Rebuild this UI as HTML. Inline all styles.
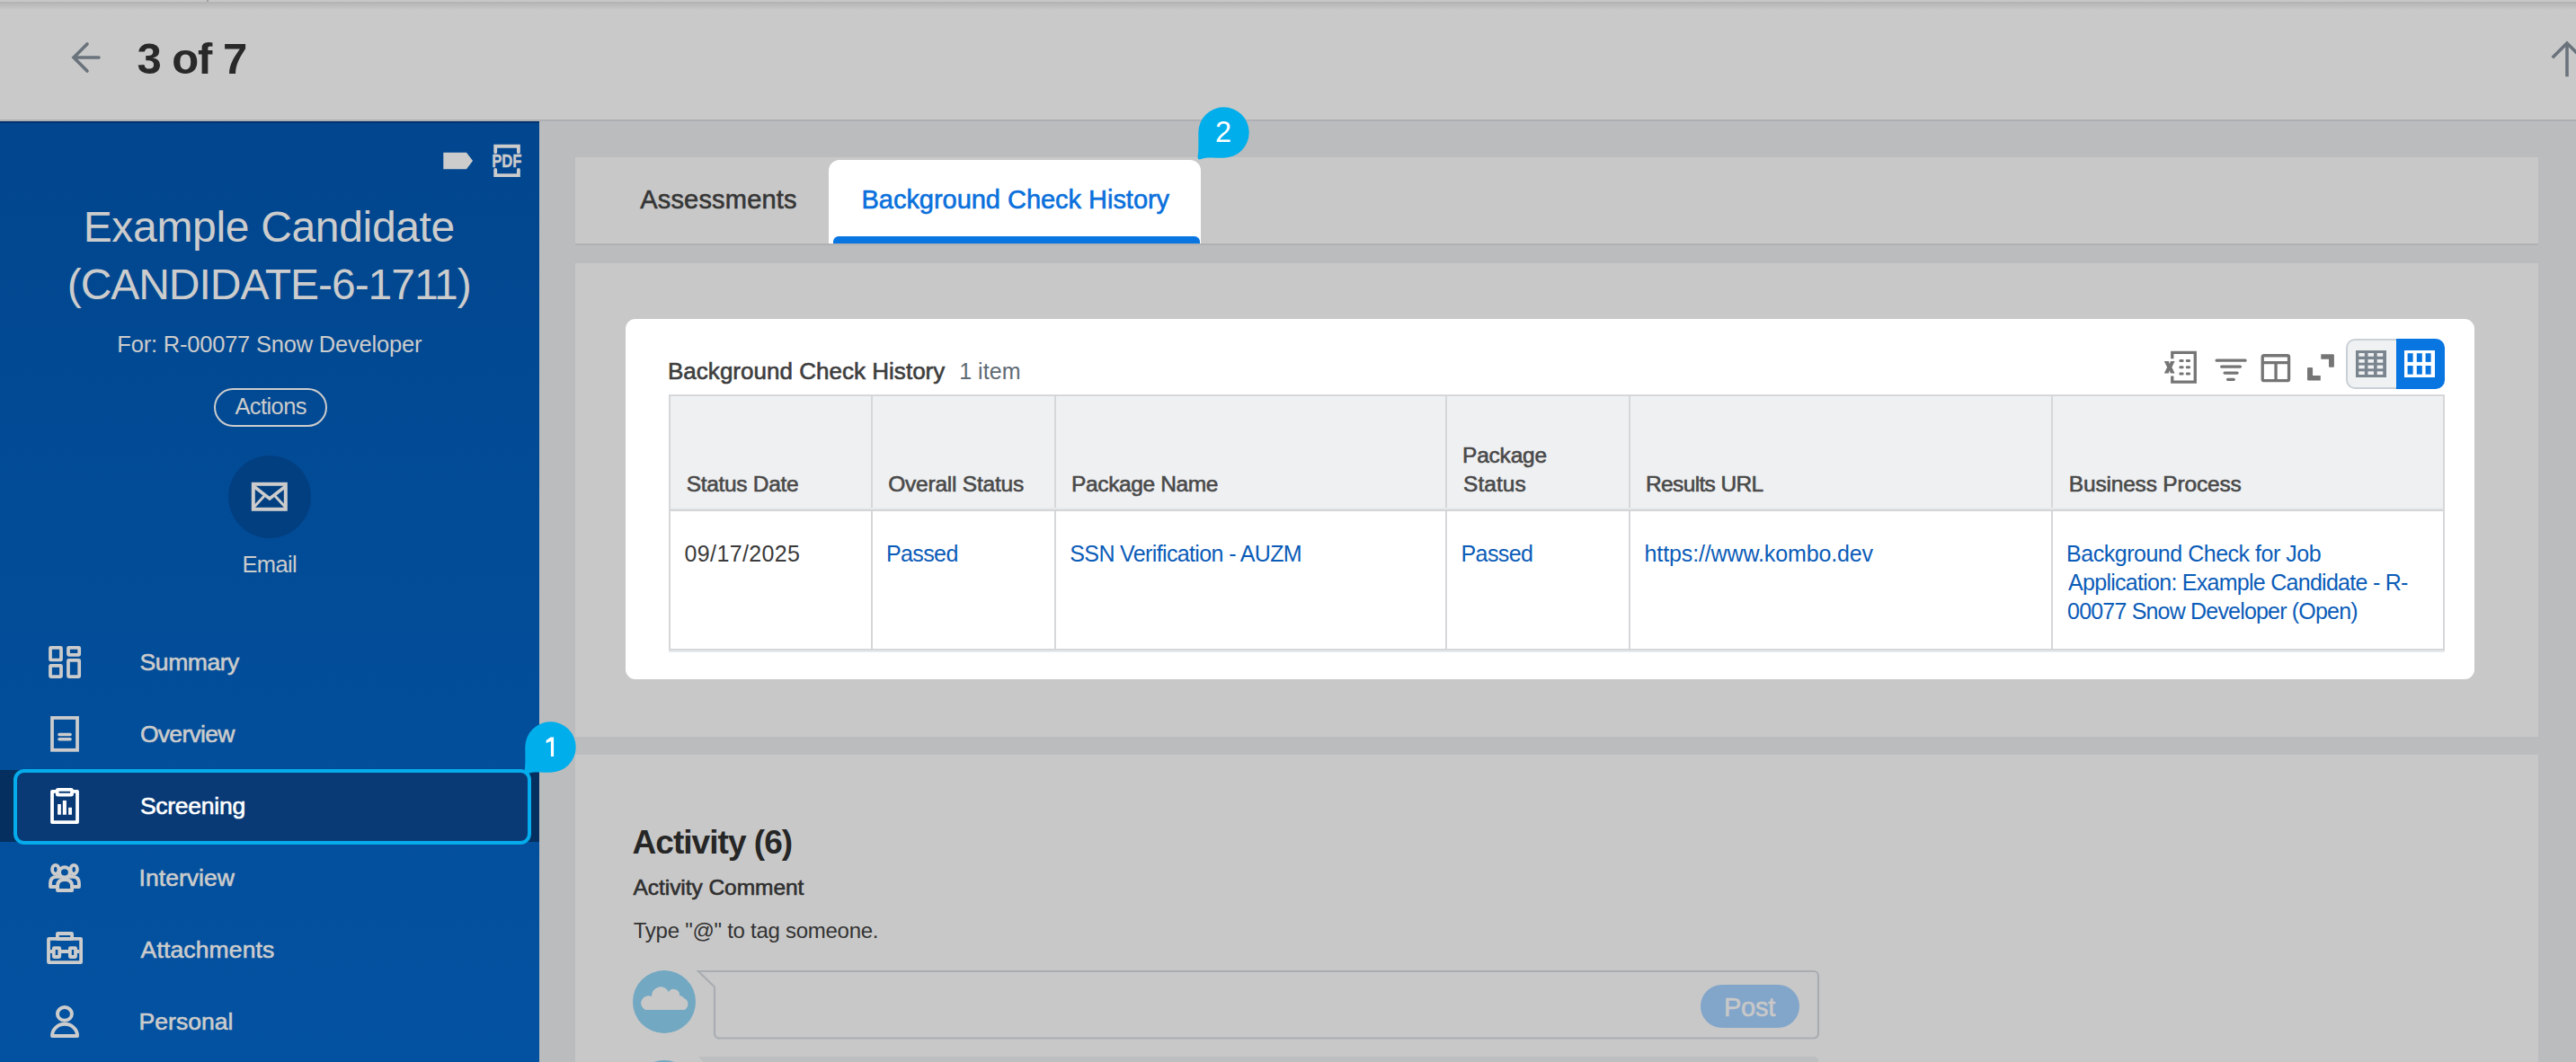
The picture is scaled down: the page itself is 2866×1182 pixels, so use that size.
<!DOCTYPE html>
<html><head><meta charset="utf-8">
<style>
*{box-sizing:border-box;margin:0;padding:0}
html,body{width:2866px;height:1182px;overflow:hidden;background:#bbbcbe;font-family:"Liberation Sans",sans-serif;position:relative}
.abs{position:absolute}
.t{position:absolute;white-space:nowrap;line-height:1}
#hdr{left:0;top:0;width:2866px;height:135px;background:#c9c9c9;border-bottom:2px solid #aeafb3}
#topbar{left:0;top:0;width:2866px;height:2px;background:#c7c7c7}
#shadow{left:0;top:2px;width:2866px;height:9px;background:linear-gradient(#b2b2b2,#c9c9c9)}
#side{left:0;top:135px;width:600px;height:1047px;background:linear-gradient(#01468e,#0352a1)}
.panel{position:absolute;left:640px;width:2184px;background:#c8c8c8}
.ic{fill:none;stroke:#757575}
</style></head><body>
<div id="hdr" class="abs"></div>
<div id="topbar" class="abs"></div>
<div id="shadow" class="abs"></div>
<div class="abs" style="left:230px;top:0;width:2px;height:2px;background:#9aa1a9"></div>

<!-- back arrow -->
<svg class="abs" style="left:78px;top:45px" width="36" height="38" viewBox="0 0 36 38">
<path d="M32 19 H5 M19 4 L4 19 L19 34" fill="none" stroke="#6a737c" stroke-width="3.6" stroke-linecap="round" stroke-linejoin="miter"/>
</svg>
<!-- up arrow -->
<svg class="abs" style="left:2838px;top:44px" width="40" height="44" viewBox="0 0 40 44">
<path d="M18 39.5 V5 M3 19 L18 4 L33 19" fill="none" stroke="#6a737c" stroke-width="3.6" stroke-linecap="square"/>
</svg>

<!-- sidebar -->
<div id="side" class="abs"></div>
<div class="abs" style="left:0;top:135px;width:600px;height:2px;background:linear-gradient(#002a66,#003575)"></div>
<svg class="abs" style="left:480px;top:150px" width="120" height="60" viewBox="0 0 2124 1062">
<path d="M235 350 H690 L815 512 L690 675 H235 Z" fill="#cccccc"/>
<path d="M1260 340 V225 H1715 V340 M1260 690 V800 H1715 V690" fill="none" stroke="#cccccc" stroke-width="68" stroke-linecap="round"/>
<text x="1189" y="635" textLength="591" lengthAdjust="spacingAndGlyphs" font-family="Liberation Sans" font-weight="700" font-size="345" fill="#cccccc" stroke="#cccccc" stroke-width="6">PDF</text>
</svg>
<div class="abs" style="left:238px;top:432px;width:126px;height:43px;border:2.5px solid #cccccc;border-radius:22px"></div>
<div class="abs" style="left:254px;top:507px;width:92px;height:92px;border-radius:50%;background:#023f81"></div>
<svg class="abs" style="left:279px;top:536px" width="42" height="34" viewBox="0 0 42 34">
<rect x="2.8" y="2.8" width="36" height="28" fill="none" stroke="#cccccc" stroke-width="4"/>
<path d="M3 5 L21 19 L39 5" fill="none" stroke="#cccccc" stroke-width="3.5"/>
<path d="M3 29 L15 16 M39 29 L27 16" fill="none" stroke="#cccccc" stroke-width="3"/>
</svg>

<!-- nav -->
<div class="abs" style="left:0;top:857px;width:600px;height:80px;background:#052f5e"></div>
<div class="abs" style="left:15px;top:856px;width:576px;height:84px;border:4px solid #05abeb;border-radius:12px;background:#0a3a76"></div>

<svg class="abs" style="left:40px;top:700px" width="260" height="80" viewBox="0 0 2576 793">
<g fill="none" stroke="#cccccc" stroke-width="37" stroke-linejoin="round">
<rect x="158" y="206" width="119" height="136" rx="6"/><rect x="356" y="206" width="121" height="81" rx="6"/>
<rect x="158" y="406" width="119" height="121" rx="6"/><rect x="356" y="346" width="121" height="181" rx="6"/>
</g></svg>
<svg class="abs" style="left:40px;top:790px" width="160" height="160" viewBox="0 0 1062 1062">
<rect x="119.5" y="59.5" width="186" height="238" fill="none" stroke="#cccccc" stroke-width="25"/>
<path d="M172 182 H253 M172 218 H253" stroke="#cccccc" stroke-width="23" stroke-linecap="round"/>
<rect x="119.5" y="602.5" width="186" height="228" fill="none" stroke="#ffffff" stroke-width="25" stroke-linejoin="round"/>
<rect x="157.5" y="590.5" width="108" height="37" rx="6" fill="#0a3a76" stroke="#ffffff" stroke-width="25"/>
<rect x="160" y="697" width="25" height="78" fill="#fff"/><rect x="198" y="670" width="27" height="105" fill="#fff"/><rect x="240" y="722" width="25" height="53" fill="#fff"/>
</svg>
<svg class="abs" style="left:46px;top:950px" width="54" height="54" viewBox="0 0 1062 1062">
<g fill="none" stroke="#cccccc" stroke-width="76" stroke-linejoin="round">
<ellipse cx="310" cy="347" rx="72" ry="95"/><ellipse cx="712" cy="347" rx="72" ry="95"/>
<path d="M197 727 V650 Q197 510 340 510 H684 Q825 510 825 650 V727 Z"/>
</g>
<ellipse cx="510" cy="410" rx="116" ry="112" fill="#03509d" stroke="#cccccc" stroke-width="78"/>
<path d="M355 805 V705 Q355 572 512 572 Q670 572 670 705 V805 Z" fill="#03509d" stroke="#cccccc" stroke-width="78" stroke-linejoin="round"/>
</svg>
<svg class="abs" style="left:46px;top:1028px" width="54" height="54" viewBox="0 0 1062 1062">
<g fill="none" stroke="#cccccc" stroke-width="75" stroke-linejoin="round">
<rect x="352" y="216" width="318" height="120" rx="8"/>
<rect x="157.5" y="332.5" width="710" height="515" rx="8"/>
<path d="M195 610 H830"/>
<rect x="272" y="532" width="126" height="196" rx="8" fill="#03519f"/>
<rect x="627" y="532" width="121" height="196" rx="8" fill="#03519f"/>
</g></svg>
<svg class="abs" style="left:46px;top:1110px" width="54" height="54" viewBox="0 0 1062 1062">
<g fill="none" stroke="#cccccc" stroke-width="78" stroke-linejoin="round">
<ellipse cx="510" cy="362" rx="157" ry="145"/>
<path d="M237 845 C237 700 360 587 512 587 C665 587 787 700 787 845 Z"/>
</g></svg>

<!-- badge 1 -->
<svg class="abs" style="left:581.3px;top:800.8px" width="62" height="64" viewBox="0 0 62 64"><path d="M3.3 30.5 A28.2 28.2 0 1 1 31.5 58.7 C20 58.7 12 57.5 7 59.8 Q2.5 62 2.6 57.5 C3.8 50 3.3 40 3.3 30.5 Z" fill="#00aeeb"/></svg>

<svg class="abs" style="left:600px;top:810px" width="26" height="40" viewBox="600 810 26 40"><path d="M612.6 820.4 H616.1 V841.9 H612.9 V824.9 L607.7 826.9 V824 Z" fill="#fff"/></svg>
<!-- main panels -->
<div class="panel" style="top:175px;height:98px;border-bottom:2px solid #b0b1b3"></div>
<div class="abs" style="left:922px;top:178px;width:414px;height:93px;background:#fff;border-radius:12px 12px 0 0"></div>
<div class="abs" style="left:927px;top:263px;width:408px;height:8px;background:#0875e1;border-radius:6px 6px 0 0"></div>
<svg class="abs" style="left:1330px;top:116.7px" width="62" height="64" viewBox="0 0 62 64"><path d="M3.3 30.5 A28.2 28.2 0 1 1 31.5 58.7 C20 58.7 12 57.5 7 59.8 Q2.5 62 2.6 57.5 C3.8 50 3.3 40 3.3 30.5 Z" fill="#00aeeb"/></svg>

<div class="panel" style="top:293px;height:527px"></div>
<div class="abs" style="left:696px;top:355px;width:2057px;height:401px;background:#fff;border-radius:11px"></div>

<!-- table -->
<div class="abs" style="left:744px;top:439px;width:1976px;height:285px;border:2px solid #d6d7d9;background:#fff"></div>
<div class="abs" style="left:744px;top:724px;width:1976px;height:2px;background:#e6eaed"></div>
<div class="abs" style="left:746px;top:441px;width:1972px;height:124px;background:#eff0f2"></div>
<div class="abs" style="left:746px;top:565px;width:1972px;height:2px;background:#e6eaed"></div>
<div class="abs" style="left:746px;top:567px;width:1972px;height:2px;background:#d3d5d7"></div>
<div class="abs" style="left:969px;top:441px;width:2px;height:124px;background:#d6d7d9"></div><div class="abs" style="left:969px;top:569px;width:2px;height:154px;background:#d6d7d9"></div>
<div class="abs" style="left:1173px;top:441px;width:2px;height:124px;background:#d6d7d9"></div><div class="abs" style="left:1173px;top:569px;width:2px;height:154px;background:#d6d7d9"></div>
<div class="abs" style="left:1608px;top:441px;width:2px;height:124px;background:#d6d7d9"></div><div class="abs" style="left:1608px;top:569px;width:2px;height:154px;background:#d6d7d9"></div>
<div class="abs" style="left:1812px;top:441px;width:2px;height:124px;background:#d6d7d9"></div><div class="abs" style="left:1812px;top:569px;width:2px;height:154px;background:#d6d7d9"></div>
<div class="abs" style="left:2282px;top:441px;width:2px;height:124px;background:#d6d7d9"></div><div class="abs" style="left:2282px;top:569px;width:2px;height:154px;background:#d6d7d9"></div>

<!-- toolbar icons -->
<svg class="abs" style="left:2395px;top:370px" width="330" height="70" viewBox="0 0 2576 546">
<g fill="none" stroke="#757575" stroke-width="26">
<path d="M170 228 V175 H369 V430 H170 V378"/>
<rect x="954" y="201" width="229" height="218" rx="14"/>
<path d="M954 262 H1183 M1070 262 V419"/>
</g>
<path d="M100 250 H140 L147 275 L155 250 H192 L167 302 L192 355 H155 L147 330 L139 355 H100 L126 302 Z" fill="#757575"/>
<g fill="#757575">
<rect x="230" y="233" width="40" height="24" rx="10"/><rect x="288" y="233" width="40" height="24" rx="10"/>
<rect x="230" y="290" width="40" height="24" rx="10"/><rect x="288" y="290" width="40" height="24" rx="10"/>
<rect x="230" y="347" width="40" height="24" rx="10"/><rect x="288" y="347" width="40" height="24" rx="10"/>
</g>
<g stroke="#757575" stroke-width="25" stroke-linecap="round">
<path d="M555 243 H805 M598 297 H761 M625 352 H735 M652 408 H705"/>
</g>
<path d="M1462 190 H1568 A8 8 0 0 1 1576 198 V294 A8 8 0 0 1 1568 302 H1538 A8 8 0 0 1 1530 294 V232 H1462 Z M1343 313 A8 8 0 0 1 1351 305 H1382 A8 8 0 0 1 1390 313 V375 H1458 V418 H1351 A8 8 0 0 1 1343 410 Z" fill="#757575"/>
</svg>
<div class="abs" style="left:2610px;top:377px;width:57px;height:56px;background:#eff1f3;border:2px solid #c9d0d6;border-right:none;border-radius:10px 0 0 10px"></div>
<div class="abs" style="left:2666px;top:377px;width:54px;height:56px;background:#0875e1;border-radius:0 10px 10px 0"></div>
<svg class="abs" style="left:2621px;top:390px" width="34" height="30" viewBox="0 0 34 30">
<rect x="0" y="0" width="34" height="30" fill="#7b858f"/>
<g fill="#eff1f3">
<rect x="3.3" y="3" width="6.5" height="3.7"/><rect x="13.5" y="3" width="6.5" height="3.7"/><rect x="23.7" y="3" width="6.5" height="3.7"/>
<rect x="3.3" y="10" width="6.5" height="3.7"/><rect x="13.5" y="10" width="6.5" height="3.7"/><rect x="23.7" y="10" width="6.5" height="3.7"/>
<rect x="3.3" y="16.6" width="6.5" height="3.7"/><rect x="13.5" y="16.6" width="6.5" height="3.7"/><rect x="23.7" y="16.6" width="6.5" height="3.7"/>
<rect x="3.3" y="23.3" width="6.5" height="3.7"/><rect x="13.5" y="23.3" width="6.5" height="3.7"/><rect x="23.7" y="23.3" width="6.5" height="3.7"/>
</g></svg>
<svg class="abs" style="left:2675px;top:390px" width="34" height="30" viewBox="0 0 34 30">
<rect x="0" y="0" width="34" height="30" fill="#ffffff"/>
<g fill="#0875e1">
<rect x="3.6" y="3.2" width="6" height="9.7"/><rect x="13.8" y="3.2" width="6" height="9.7"/><rect x="23.6" y="3.2" width="6" height="9.7"/>
<rect x="3.6" y="17" width="6" height="9.7"/><rect x="13.8" y="17" width="6" height="9.7"/><rect x="23.6" y="17" width="6" height="9.7"/>
</g></svg>

<div class="panel" style="top:840px;height:342px"></div>
<!-- activity -->
<div class="abs" style="left:704px;top:1080px;width:70px;height:70px;border-radius:50%;background:#72a8c2"></div>
<svg class="abs" style="left:704px;top:1080px" width="70" height="70" viewBox="0 0 70 70">
<path d="M14 44 H57 A7 7 0 0 0 57 31 A6 6 0 0 0 52 28 A6.5 6.5 0 0 0 40 24 A10 10 0 0 0 21 29 A7.5 7.5 0 0 0 14 44 Z" fill="#c8c8c8"/>
</svg>
<svg class="abs" style="left:770px;top:1074px" width="1260" height="90" viewBox="0 0 1260 90">
<path d="M7 7 H1248 A5 5 0 0 1 1253 12 V76.5 A5 5 0 0 1 1248 81.5 H31 A5 5 0 0 1 25 76.5 V24.5 Z" fill="#c8c8c8" stroke="#a9adb2" stroke-width="2.2"/>
</svg>
<div class="abs" style="left:1892px;top:1096px;width:110px;height:48px;border-radius:24px;background:#82a5ca"></div>
<div class="abs" style="left:704px;top:1180px;width:70px;height:70px;border-radius:50%;background:#72a8c2"></div>
<svg class="abs" style="left:770px;top:1170px" width="1260" height="20" viewBox="0 0 1260 20">
<path d="M7 6 H1248 A5 5 0 0 1 1253 11 V30 H25 V24 Z" fill="#bdbec0"/>
</svg>

<div class="t" style="left:152.5px;top:41.0px;font-size:49px;color:#292929;letter-spacing:-1.06px;font-weight:700">3 of 7</div>
<div class="t" style="left:92.7px;top:229.3px;font-size:48px;color:#cccccc;letter-spacing:-0.331px">Example Candidate</div>
<div class="t" style="left:74.7px;top:293.0px;font-size:48px;color:#cccccc;letter-spacing:-1.041px">(CANDIDATE-6-1711)</div>
<div class="t" style="left:130.3px;top:370.7px;font-size:25.5px;color:#cccccc;letter-spacing:-0.204px">For: R-00077 Snow Developer</div>
<div class="t" style="left:261.4px;top:440.4px;font-size:25.5px;color:#cccccc;letter-spacing:-0.583px">Actions</div>
<div class="t" style="left:269.5px;top:616.4px;font-size:25.5px;color:#cccccc;letter-spacing:-0.65px">Email</div>
<div class="t" style="left:155.6px;top:724.2px;font-size:26.5px;color:#cccccc;letter-spacing:-0.433px;-webkit-text-stroke:0.6px #cccccc">Summary</div>
<div class="t" style="left:155.9px;top:804.1px;font-size:26.5px;color:#cccccc;letter-spacing:-0.7px;-webkit-text-stroke:0.6px #cccccc">Overview</div>
<div class="t" style="left:155.9px;top:884.0px;font-size:26.5px;color:#ffffff;letter-spacing:-0.262px;-webkit-text-stroke:0.6px #ffffff">Screening</div>
<div class="t" style="left:154.6px;top:964.0px;font-size:26.5px;color:#cccccc;letter-spacing:0.037px;-webkit-text-stroke:0.6px #cccccc">Interview</div>
<div class="t" style="left:156.6px;top:1044.0px;font-size:26.5px;color:#cccccc;letter-spacing:0.14px;-webkit-text-stroke:0.6px #cccccc">Attachments</div>
<div class="t" style="left:154.6px;top:1124.0px;font-size:26.5px;color:#cccccc;letter-spacing:0.029px;-webkit-text-stroke:0.6px #cccccc">Personal</div>
<div class="t" style="left:712.2px;top:208.2px;font-size:29px;color:#363636;letter-spacing:0.19px;-webkit-text-stroke:0.6px #363636">Assessments</div>
<div class="t" style="left:958.5px;top:208.0px;font-size:29px;color:#0a70dc;letter-spacing:-0.03px;-webkit-text-stroke:0.6px #0a70dc">Background Check History</div>
<div class="t" style="left:743.0px;top:399.8px;font-size:26px;color:#3d3d3d;letter-spacing:0.022px;-webkit-text-stroke:0.6px #3d3d3d">Background Check History</div>
<div class="t" style="left:1067.2px;top:400.8px;font-size:25px;color:#5f6b75;letter-spacing:0.04px">1 item</div>
<div class="t" style="left:763.7px;top:527.0px;font-size:24.5px;color:#494949;letter-spacing:-0.31px;-webkit-text-stroke:0.6px #494949">Status Date</div>
<div class="t" style="left:988.2px;top:527.0px;font-size:24.5px;color:#494949;letter-spacing:-0.223px;-webkit-text-stroke:0.6px #494949">Overall Status</div>
<div class="t" style="left:1192.0px;top:527.0px;font-size:24.5px;color:#494949;letter-spacing:-0.364px;-webkit-text-stroke:0.6px #494949">Package Name</div>
<div class="t" style="left:1627.0px;top:495.4px;font-size:24.5px;color:#494949;letter-spacing:-0.2px;-webkit-text-stroke:0.6px #494949">Package</div>
<div class="t" style="left:1628.0px;top:527.0px;font-size:24.5px;color:#494949;letter-spacing:0.04px;-webkit-text-stroke:0.6px #494949">Status</div>
<div class="t" style="left:1831.0px;top:527.0px;font-size:24.5px;color:#494949;letter-spacing:-0.64px;-webkit-text-stroke:0.6px #494949">Results URL</div>
<div class="t" style="left:2301.8px;top:527.0px;font-size:24.5px;color:#494949;letter-spacing:-0.187px;-webkit-text-stroke:0.6px #494949">Business Process</div>
<div class="t" style="left:761.5px;top:604.2px;font-size:25px;color:#3a3a3a;letter-spacing:0.378px">09/17/2025</div>
<div class="t" style="left:986.0px;top:604.2px;font-size:25px;color:#0b5cb8;letter-spacing:-0.62px">Passed</div>
<div class="t" style="left:1190.3px;top:604.2px;font-size:25px;color:#0b5cb8;letter-spacing:-0.632px">SSN Verification - AUZM</div>
<div class="t" style="left:1625.5px;top:604.2px;font-size:25px;color:#0b5cb8;letter-spacing:-0.6px">Passed</div>
<div class="t" style="left:1829.6px;top:604.2px;font-size:25px;color:#0b5cb8;letter-spacing:-0.13px">https://www.kombo.dev</div>
<div class="t" style="left:2299.1px;top:603.7px;font-size:25px;color:#0b5cb8;letter-spacing:-0.483px">Background Check for Job</div>
<div class="t" style="left:2301.1px;top:635.5px;font-size:25px;color:#0b5cb8;letter-spacing:-0.726px">Application: Example Candidate - R-</div>
<div class="t" style="left:2300.1px;top:667.7px;font-size:25px;color:#0b5cb8;letter-spacing:-0.815px">00077 Snow Developer (Open)</div>
<div class="t" style="left:703.5px;top:919.2px;font-size:37px;color:#262626;letter-spacing:-0.955px;font-weight:700">Activity (6)</div>
<div class="t" style="left:704.5px;top:975.7px;font-size:24.5px;color:#2f2f2f;letter-spacing:-0.047px;-webkit-text-stroke:0.6px #2f2f2f">Activity Comment</div>
<div class="t" style="left:704.8px;top:1023.5px;font-size:24px;color:#333333;letter-spacing:-0.27px">Type "@" to tag someone.</div>
<div class="t" style="left:1917.9px;top:1107.0px;font-size:29px;color:#c8c8c8;letter-spacing:-0.2px;-webkit-text-stroke:0.6px #c8c8c8">Post</div>
<div class="t" style="left:1352.0px;top:131.4px;font-size:32.5px;color:#ffffff;letter-spacing:0.0px">2</div>
</body></html>
